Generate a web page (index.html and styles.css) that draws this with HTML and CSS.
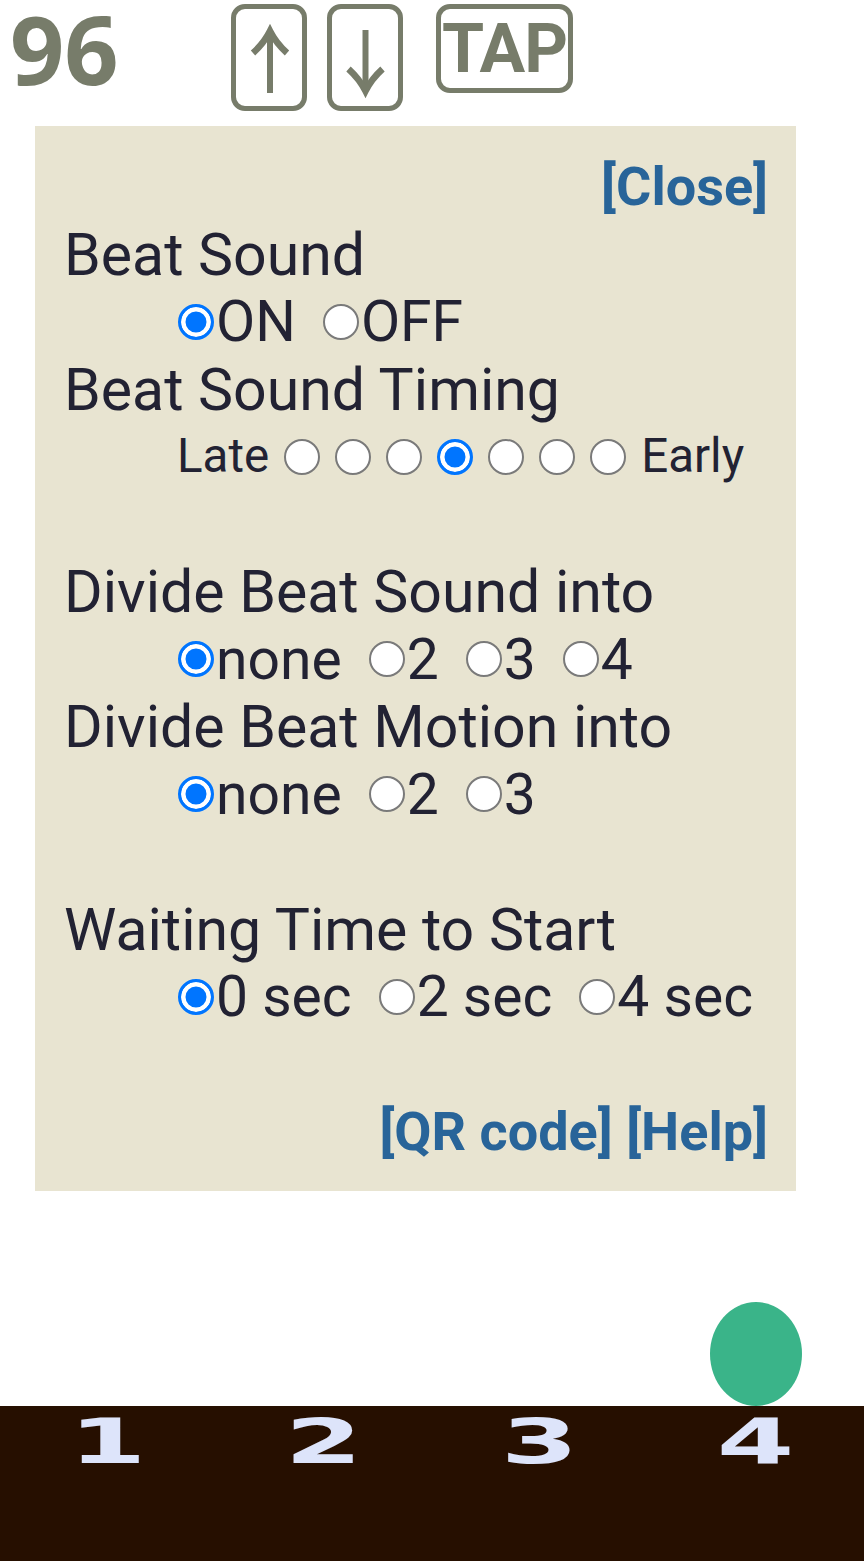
FILE: index.html
```html
<html lang="en">
<head>
    <meta charset="utf-8">
    <title>Metronome</title>
    <link rel="stylesheet" href="styles.css">
</head>
<body>
<div class="top">
    <div class="tempo">96</div>
    <div class="btn arrow up">
        <svg viewBox="0 0 66 97" width="66" height="97">
            <path class="shaft" d="M34 26V84"/>
            <path class="head" d="M17 44Q28 34 34 22Q40 34 51 44"/>
        </svg>
    </div>
    <div class="btn arrow down">
        <svg viewBox="0 0 66 97" width="66" height="97">
            <path class="shaft" d="M33.5 21V79"/>
            <path class="head" d="M16.5 60Q27.5 70 33.5 82Q39.5 70 50.5 60"/>
        </svg>
    </div>
    <div class="btn tap">TAP</div>
</div>

<div class="panel">
    <div class="row links"><a>[Close]</a></div>

    <div class="row title">Beat Sound</div>
    <div class="row options">
        <label class="opt"><input type="radio" name="sound" checked>ON</label>
        <label class="opt"><input type="radio" name="sound">OFF</label>
    </div>

    <div class="row title">Beat Sound Timing</div>
    <div class="row timing gap-after">
        <span>Late</span>
        <input type="radio" name="timing">
        <input type="radio" name="timing">
        <input type="radio" name="timing">
        <input type="radio" name="timing" checked>
        <input type="radio" name="timing">
        <input type="radio" name="timing">
        <input type="radio" name="timing">
        <span>Early</span>
    </div>

    <div class="row title">Divide Beat Sound into</div>
    <div class="row options">
        <label class="opt"><input type="radio" name="divsound" checked>none</label>
        <label class="opt"><input type="radio" name="divsound">2</label>
        <label class="opt"><input type="radio" name="divsound">3</label>
        <label class="opt"><input type="radio" name="divsound">4</label>
    </div>

    <div class="row title">Divide Beat Motion into</div>
    <div class="row options gap-after">
        <label class="opt"><input type="radio" name="divmotion" checked>none</label>
        <label class="opt"><input type="radio" name="divmotion">2</label>
        <label class="opt"><input type="radio" name="divmotion">3</label>
    </div>

    <div class="row title">Waiting Time to Start</div>
    <div class="row options gap-after">
        <label class="opt"><input type="radio" name="wait" checked>0 sec</label>
        <label class="opt"><input type="radio" name="wait">2 sec</label>
        <label class="opt"><input type="radio" name="wait">4 sec</label>
    </div>

    <div class="row links"><a>[QR code]</a> <a>[Help]</a></div>
</div>

<div class="stage">
    <div class="beat-dot"></div>
</div>

<div class="counts">
    <div class="count"><span>1</span></div>
    <div class="count"><span>2</span></div>
    <div class="count"><span>3</span></div>
    <div class="count"><span>4</span></div>
</div>
</body>
</html>
```

FILE: styles.css
```css
*,
*:before,
*:after {
    margin: 0;
    padding: 0;
    box-sizing: border-box;
}

body {
    width: 864px;
    background-color: #ffffff;
    font-family: Roboto, "Liberation Sans", sans-serif;
}

/* header: tempo + buttons */
.top {
    display: flex;
    align-items: flex-start;
    height: 126px;
    padding: 4px 0 0 10px;
    color: #777c6a;
}

.top > .tempo {
    width: 221px;
    font-family: "Open Sans", sans-serif;
    font-weight: 700;
    font-size: 95px;
    line-height: 88px;
}

.top > .btn {
    border: 5px solid #777c6a;
    border-radius: 14px;
}

.top > .arrow {
    width: 76px;
    height: 107px;
}

.top > .arrow svg {
    display: block;
}

.top > .arrow .shaft {
    stroke: #777c6a;
    stroke-width: 6;
    fill: none;
}

.top > .arrow .head {
    stroke: #777c6a;
    stroke-width: 6.5;
    fill: none;
}

.top > .down {
    margin-left: 20px;
}

.top > .tap {
    display: flex;
    justify-content: center;
    align-items: center;
    margin-left: 33px;
    width: 137px;
    height: 89px;
    font-weight: 700;
    font-size: 68px;
    line-height: 68px;
    letter-spacing: -1px;
}

/* settings panel */
.panel {
    margin-left: 35px;
    width: 761px;
    padding: 27px 28px 25.5px 29px;
    background-color: #e8e4d1;
    color: #222233;
    font-size: 59px;
    line-height: 67.5px;
}

.panel > .row {
    height: 67.5px;
    white-space: nowrap;
}

.panel > .row.gap-after {
    margin-bottom: 67.5px;
}

.panel > .links {
    text-align: right;
    font-weight: 700;
    font-size: 54px;
}

.panel > .links a {
    color: #286499;
}

.panel input[type="radio"] {
    appearance: none;
    -webkit-appearance: none;
    flex: none;
    width: 36px;
    height: 36px;
    margin: 0;
    border: 2.5px solid #7a7a7a;
    border-radius: 50%;
    background-color: #ffffff;
}

.panel input[type="radio"]:checked {
    border: 3.5px solid #0075ff;
    background-color: #0075ff;
    box-shadow: inset 0 0 0 4.5px #ffffff;
}

.panel > .options {
    display: flex;
    align-items: center;
    gap: 27px;
    margin-left: 114px;
    font-size: 57px;
}

.panel > .options .opt {
    display: flex;
    align-items: center;
    gap: 2px;
}

.panel > .timing {
    display: flex;
    align-items: center;
    gap: 15px;
    margin-left: 113px;
    font-size: 47.5px;
}

/* beat indicator */
.stage {
    display: grid;
    grid-template-columns: repeat(4, 1fr);
    height: 215px;
}

.stage > .beat-dot {
    grid-column: 4;
    align-self: end;
    justify-self: center;
    width: 92px;
    height: 104px;
    border-radius: 50%;
    background-color: #3ab489;
}

.counts {
    display: grid;
    grid-template-columns: repeat(4, 1fr);
    height: 155px;
    padding-top: 5px;
    background-color: #260f00;
}

.counts > .count {
    text-align: center;
    color: #dde4fa;
    font-family: "DejaVu Sans", sans-serif;
    font-weight: 700;
    font-size: 62px;
    line-height: 62px;
}

.counts > .count span {
    display: inline-block;
    transform: scaleX(1.8);
}
```
